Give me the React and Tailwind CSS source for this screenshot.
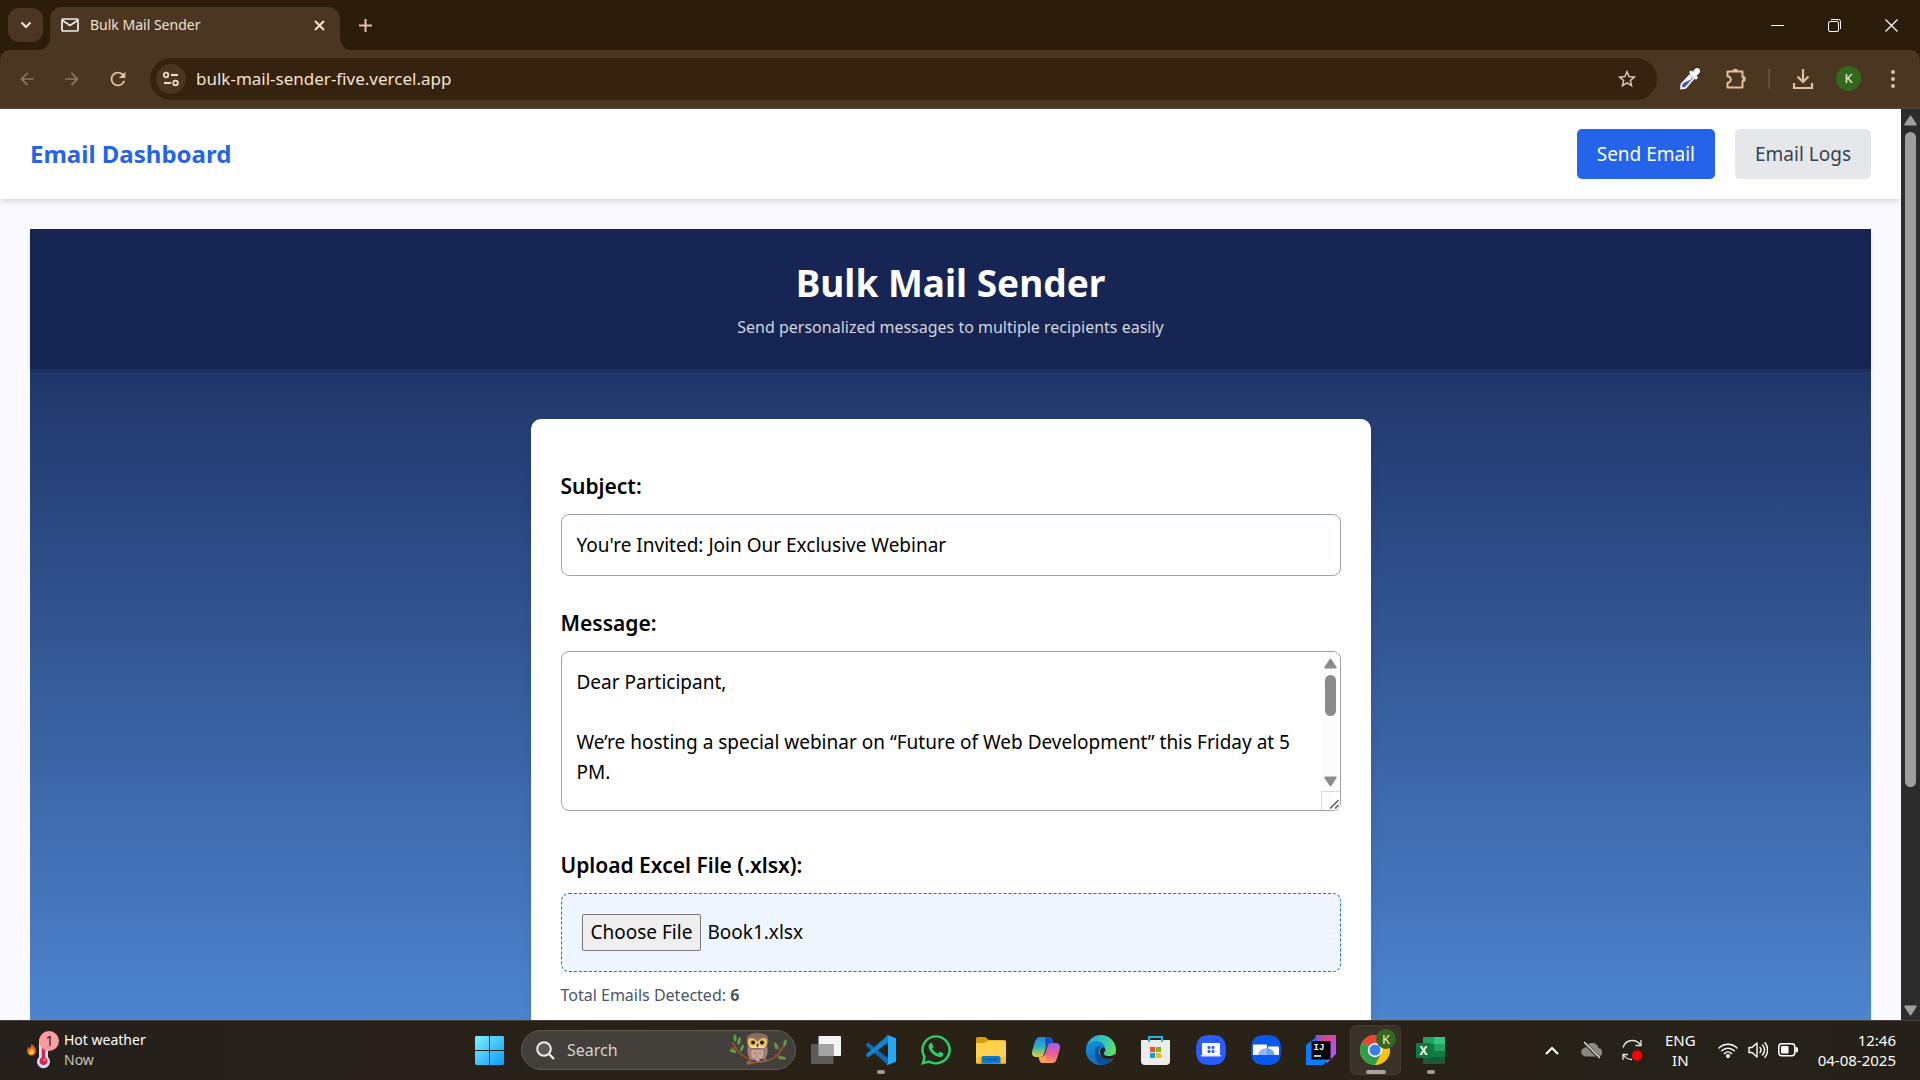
import React, { useRef } from "react";
import { MdArrowBack, MdArrowForward, MdRefresh, MdStarBorder } from "react-icons/md";
import { FaWhatsapp } from "react-icons/fa";

const MESSAGE = `Dear Participant,

We’re hosting a special webinar on “Future of Web Development” this Friday at 5 PM.`;

/* ---------- browser icons ---------- */

const MailIcon = () => (
  <svg width="18" height="14" viewBox="0 0 18 14" fill="none" stroke="#f1efee" strokeWidth="1.700">
    <rect x="1" y="1" width="16" height="12" rx="1" />
    <path d="M1.5 2.5 9 7.5l7.5-5" />
  </svg>
);

const TuneIcon = () => (
  <svg width="18" height="16" viewBox="0 0 18 16" fill="none" stroke="#ecdccc" strokeWidth="1.800">
    <circle cx="4" cy="4" r="2.3" />
    <path d="M9 4h7M2 12h7" />
    <circle cx="13.5" cy="12" r="2.3" />
  </svg>
);

const DropperIcon = () => (
  <svg width="22" height="24" viewBox="0 0 22 24">
    <path d="M2 21.5 2.5 17 12 7l3.5 3.5-9 10.3z" fill="#3f51c5" stroke="#fff" strokeWidth="1.8" strokeLinejoin="round" />
    <path d="m4 16 7-7 3 1-3 3z" fill="#fff" />
    <path d="m10 5 2-1.5 1.5 1.2L16 2c1.500-1.500 3-1.500 4.200 0s1.300 2.800 0 4.200l-2.700 2.600L19 10.500 17 13z" fill="#fff" />
  </svg>
);

const PuzzleIcon = () => (
  <svg width="22" height="22" viewBox="0 0 22 22">
    <path d="M2.500 3.500h15v5.300a2.200 2.200 0 0 1 0 4.400v6.300h-15v-4.700a3.300 3.300 0 0 0 0-6.600z" fill="none" stroke="#e2bf9f" strokeWidth="2" strokeLinejoin="round" />
    <path d="M7.500 3.500a2.800 2.800 0 0 1 5.600 0zM17.500 8.500a2.600 2.600 0 0 1 0 5z" fill="#e2bf9f" />
  </svg>
);

const DownloadIcon = () => (
  <svg width="22" height="22" viewBox="0 0 22 22" fill="none" stroke="#e2bf9f" strokeWidth="2.2">
    <path d="M11 1v12.500M5.500 8.500 11 14l5.500-5.500M2 15v5h18v-5" />
  </svg>
);

const Triangle = ({ down, color }) => (
  <svg width="13" height="11" viewBox="0 0 13 11" className={down ? "rotate-180" : ""}>
    <path d="M6.500 1.500 11.800 9.500H1.200z" fill={color} stroke={color} strokeWidth="1.800" strokeLinejoin="round" />
  </svg>
);

/* ---------- taskbar icons ---------- */

const WindowsIcon = () => (
  <svg width="29" height="29" viewBox="0 0 29 29">
    <defs>
      <linearGradient id="win" x1="0" y1="0" x2="1" y2="1">
        <stop offset="0" stopColor="#7df0ff" />
        <stop offset="1" stopColor="#0a9bf8" />
      </linearGradient>
    </defs>
    <path fill="url(#win)" d="M1 0h13v14H0V1zM15 0h13l1 1v13H15zM0 15h14v14H1l-1-1zM15 15h14v13l-1 1H15z" />
  </svg>
);

const WeatherIcon = () => (
  <svg width="32" height="38" viewBox="0 0 32 38">
    <path d="M4.500 13c2.500 1.500 4.500 4 4.500 7a4.500 4.500 0 0 1-9 0c0-2 1-3 1.500-4l1.500 1c.8-1.500 1.500-2.500 1.500-4z" fill="#ee5a24" />
    <path d="M4.800 17.500c1.800 1.500 2.200 2.500 2.200 3.800a2.500 2.500 0 0 1-5 0c0-1.500 2-2 2.800-3.800z" fill="#ffc93c" />
    <path d="M12 8h9v18a6.500 6.500 0 1 1-9 0z" fill="#cfe2f8" />
    <path d="M14.700 9h3.600v17.600a4 4 0 1 1-3.600 0z" fill="#d9264d" />
    <circle cx="17.500" cy="29" r="1.200" fill="#ff9fb0" />
    <circle cx="22" cy="10" r="10" fill="#ff9a9f" />
    <text x="22.500" y="15" fontSize="14" textAnchor="middle" fill="#2b2020" fontFamily="Noto Sans">1</text>
  </svg>
);

const OwlIcon = () => (
  <svg width="57" height="34" viewBox="0 0 57 34">
    <path d="M3 10c3 6 6 11 12 14 7 4 12 6 20 4 8-1 13-5 19-15M7 16l-5-1M50 17l-3-5M45 22l7 2" fill="none" stroke="#8a5230" strokeWidth="1.800" strokeLinecap="round" />
    <path d="M17 30.500c6-3 12-2 19-4" stroke="#a4643a" strokeWidth="3.500" fill="none" />
    <g fill="#5f9d4a">
      <ellipse cx="5" cy="5" rx="1.500" ry="3.500" />
      <ellipse cx="9" cy="8" rx="1.600" ry="3.800" transform="rotate(15 9 8)" />
      <ellipse cx="3" cy="18" rx="3.500" ry="1.600" transform="rotate(15 3 18)" />
      <ellipse cx="12" cy="15" rx="1.500" ry="3.500" transform="rotate(20 12 15)" />
      <ellipse cx="46" cy="13" rx="1.500" ry="3.500" transform="rotate(-15 46 13)" />
      <ellipse cx="55" cy="10" rx="1.500" ry="3.500" transform="rotate(15 55 10)" />
      <ellipse cx="52" cy="25" rx="4" ry="1.600" transform="rotate(8 52 25)" />
    </g>
    <path d="M18 12c-1.500 8 0 14 5 16h9c5-3 7-8 5-16z" fill="#a07e72" />
    <path d="M22 17c-2 5 0 9 4.500 11 6-1 8-6 6-11z" fill="#c9a996" />
    <path d="M24 20h2M29 20h2M26 23h2M24 26h2M29 26h2" stroke="#8a6455" strokeWidth="1.200" />
    <path d="M17 4c1-2.500 6-4 10.500-4S37 1.500 38 4c1 4 0 8-2 10.500-4 2-13 2-17 0C17 12 16 8 17 4z" fill="#8f6a63" />
    <path d="M18.500 6c3-2 6 0 9 3 3-3 6-5 9-3 1 5-.5 9-4 9h-10c-3.500 0-5-4-4-9z" fill="#f0dfc8" />
    <circle cx="22.500" cy="9.500" r="4" fill="#f0c230" />
    <circle cx="32.500" cy="9.500" r="4" fill="#f0c230" />
    <circle cx="23" cy="9.500" r="2" fill="#1f1a17" />
    <circle cx="32" cy="9.500" r="2" fill="#1f1a17" />
    <path d="m27.500 10 1.500 2-1.500 3L26 12z" fill="#7d4c2a" />
    <path d="M21 27h5v2h-5zM30 26h4v2h-4z" fill="#4a3c8f" />
  </svg>
);

const TaskViewIcon = () => (
  <svg width="30" height="28" viewBox="0 0 30 28">
    <rect x="7.500" y="0" width="22.500" height="20" rx="1" fill="#f4f4f4" />
    <rect x="0" y="8" width="22.500" height="20" rx="1" fill="#666" fillOpacity=".85" />
    <path d="M7.500 8h15v12h-15z" fill="#a3a3a3" />
  </svg>
);

const CodeIcon = () => (
  <svg width="30" height="30" viewBox="0 0 30 30">
    <path d="M0 9.500 2.200 7.500 22 23v7L.3 11z" fill="#0b6cb5" />
    <path d="M0 20.500 2.200 22.500 22 7.500V0L.3 19z" fill="#1183cf" />
    <path d="M21.500 0 30 3.200v23.500L21.500 30c-.8 0-1.200-.4-1.500-.8 1 .5 2 0 2-1.200V2c0-1.200-1-1.700-2-1.200.3-.4.700-.8 1.500-.8z" fill="#29a8f2" />
  </svg>
);

const FolderIcon = () => (
  <svg width="30" height="27" viewBox="0 0 30 27">
    <path d="M0 1.500Q0 0 1.500 0H9c1.500 0 2.500 3 4 3h15.500Q30 3 30 4.500V12H0z" fill="#dc9a0c" />
    <path d="M0 6h8.500l4-2.500h16Q30 3.500 30 5v20.500q0 1-1 1H1q-1 0-1-1z" fill="#ffd24d" />
    <path d="M0 20h30v5.500q0 1-1 1H1q-1 0-1-1z" fill="#f9c22e" />
    <path d="M5.500 26.500V21q0-2 2-2h15q2 0 2 2v5.500z" fill="#1376c4" />
    <path d="M9 22.500h12" stroke="#0b4f8d" strokeWidth="1.200" />
  </svg>
);

const CopilotIcon = () => (
  <svg width="28" height="26" viewBox="0 0 28 26">
    <defs>
      <linearGradient id="copA" x1="0" y1="0" x2="0" y2="1">
        <stop offset="0" stopColor="#1c86ee" />
        <stop offset=".5" stopColor="#2bb5b5" />
        <stop offset="1" stopColor="#e9c93a" />
      </linearGradient>
      <linearGradient id="copB" x1="0" y1="0" x2="0" y2="1">
        <stop offset="0" stopColor="#a25bf0" />
        <stop offset=".6" stopColor="#f0608a" />
        <stop offset="1" stopColor="#ff9c5e" />
      </linearGradient>
    </defs>
    <path d="M8 0h9c2 0 3 1 3.500 3l.7 3H18c-2 0-3 1-3.500 3l-2 6.500C11.500 19 10.500 20 8 20H4c-4 0-4.700-3-3.500-7L3 4.500C4 1.500 5.500 0 8 0z" fill="url(#copA)" />
    <path d="M13 0h4c2 0 3 1 3.500 3l.7 3H18c-2 0-3 1-3.500 3l-.8 2z" fill="#1851c4" />
    <path d="M20 26h-9c-2 0-3-1-3.500-3L6.800 20H9c2.500 0 3.500-1 4.500-4.500l2-6.500C16 7 17 6 19 6h5c4 0 4.700 3 3.500 7L25 21.500C24 24.500 22.500 26 20 26z" fill="url(#copB)" />
    <path d="M15 26h-4c-2 0-3-1-3.500-3l-.7-3H9c2.500 0 3.500-1 4.300-3.500z" fill="#ffa24c" />
  </svg>
);

const EdgeIcon = () => (
  <svg width="30" height="30" viewBox="0 0 30 30">
    <defs>
      <linearGradient id="edgeTop" x1="0" y1="0.200" x2="1" y2="0.500">
        <stop offset="0" stopColor="#2aa6e2" />
        <stop offset=".6" stopColor="#35c9b4" />
        <stop offset="1" stopColor="#6ee04e" />
      </linearGradient>
      <linearGradient id="edgeBody" x1="0" y1="0" x2="0.600" y2="1">
        <stop offset="0" stopColor="#1492dd" />
        <stop offset="1" stopColor="#0f66b5" />
      </linearGradient>
    </defs>
    <circle cx="15" cy="15" r="15" fill="url(#edgeTop)" />
    <path d="M0 14C1 8 6 6 10 6c6 0 9 4 9 8-3-2-6 0-6 4 0 5 6 8 14 5-2 4-7 7-12 7A15 15 0 0 1 0 14z" fill="url(#edgeBody)" />
    <path d="M9 17c0-4 3-6 6-6-3 2-3 5-2 8 2 4 8 5 14.500 3.500C25 27.500 20 30 15.500 30 11 28 8.500 22 9 17z" fill="#0c4f97" />
    <path d="M17.500 12c2 1 2.500 3 1 5-1.500 1.500-.5 3.500 3 4 3 .3 6-.5 7.200-2L30 23l-3 .500c-6 1.500-11 0-12.500-3-1.500-4-.5-7 3-8.500z" fill="#29231c" />
  </svg>
);

const StoreIcon = () => (
  <svg width="29" height="29" viewBox="0 0 29 29">
    <path d="M8 6V1h13v5" fill="none" stroke="#28b4ea" strokeWidth="2" />
    <path d="M0 5q0-1 1-1h27q1 0 1 1v20q0 4-4 4H4q-4 0-4-4z" fill="#ececec" />
    <path d="M8 4h-1v2h2V4zM20 4h2v2h-2z" fill="#28b4ea" />
    <path d="M9 11h5v5H9z" fill="#f25022" />
    <path d="M15 11h5v5h-5z" fill="#7fba00" />
    <path d="M9 17h5v5H9z" fill="#00a4ef" />
    <path d="M15 17h5v5h-5z" fill="#ffb900" />
  </svg>
);

const LaptopIcon = () => (
  <svg width="30" height="30" viewBox="0 0 30 30">
    <path d="M15 0c11 0 15 4 15 15s-4 15-15 15S0 26 0 15 4 0 15 0z" fill="#2a5cff" />
    <rect x="6" y="8" width="18" height="12" rx="1" fill="#fff" />
    <path d="M4.500 20h21l-1 1.500h-19z" fill="#dfe7ff" />
    <g fill="#2a5cff">
      <rect x="11.500" y="11" width="3" height="3" rx="1" />
      <rect x="15.500" y="11" width="3" height="3" rx="1" />
      <rect x="11.500" y="15" width="3" height="3" rx="1" />
      <rect x="15.500" y="15" width="3" height="3" rx="1" />
    </g>
  </svg>
);

const ShareIcon = () => (
  <svg width="30" height="30" viewBox="0 0 30 30">
    <path d="M15 0c11 0 15 4 15 15s-4 15-15 15S0 26 0 15 4 0 15 0z" fill="#0a57ee" />
    <rect x="2" y="9.500" width="14" height="10.500" rx="1" fill="#fff" />
    <rect x="17" y="11.500" width="11" height="8.500" rx="1" fill="#fff" />
    <path d="M7 20a8.500 7 0 0 1 9.500-6.800V20z" fill="#8fb8f5" />
    <path d="M16.500 20v-6.800A8 7 0 0 1 23.500 20z" fill="#6fa2f2" />
  </svg>
);

const IdeaIcon = () => (
  <svg width="30" height="30" viewBox="0 0 30 30">
    <defs>
      <linearGradient id="idea" x1="0" y1="0" x2="1" y2="0.600">
        <stop offset="0" stopColor="#5b5fe8" />
        <stop offset=".5" stopColor="#e0428f" />
        <stop offset="1" stopColor="#a45cf5" />
      </linearGradient>
    </defs>
    <path d="M10 0h20v19l-9 9-14-14z" fill="url(#idea)" />
    <path d="M0 10 9 3l14 21-6 6H0z" fill="#087cfa" />
    <rect x="5.500" y="6" width="19" height="18.500" fill="#000" />
    <text x="7.500" y="15" fontSize="9" fontWeight="bold" fill="#fff" fontFamily="Liberation Mono">IJ</text>
    <path d="M8 21h7" stroke="#fff" strokeWidth="1.500" />
  </svg>
);

const ChromeIcon = () => (
  <svg width="36" height="36" viewBox="0 0 36 36">
    <circle cx="15" cy="21" r="15" fill="#fbc116" />
    <path d="M15 21 2 13.500A15 15 0 0 1 28 13.500z" fill="#ea4335" />
    <path d="M15 21 2 13.500A15 15 0 0 0 15 36l6.500-11.300z" fill="#2f9e4b" />
    <path d="M15 14h13.300A15 15 0 0 1 15 36l6.500-11.300z" fill="#fbc116" />
    <circle cx="15" cy="21" r="7.200" fill="#fff" />
    <circle cx="15" cy="21" r="5.600" fill="#3b7ded" />
    <circle cx="26" cy="10" r="10" fill="#33691e" />
    <text x="26" y="15" fontSize="13" textAnchor="middle" fill="#e6ecdf" fontFamily="Noto Sans">K</text>
  </svg>
);

const ExcelIcon = () => (
  <svg width="29" height="27" viewBox="0 0 29 27">
    <path d="M7 0h11v7H7z" fill="#21a366" />
    <path d="M18 0h11v7H18z" fill="#33c481" />
    <path d="M7 7h11v7H7z" fill="#107c41" />
    <path d="M18 7h11v7H18z" fill="#21a366" />
    <path d="M7 14h22v7H7z" fill="#107c41" />
    <path d="M7 20h22v7H7z" fill="#185c37" />
    <rect y="6" width="15" height="15" rx="1" fill="#0f7a40" />
    <text x="7.500" y="18" fontSize="12" fontWeight="bold" textAnchor="middle" fill="#fff" fontFamily="Noto Sans">X</text>
  </svg>
);

const CloudOffIcon = () => (
  <svg width="22" height="18" viewBox="0 0 22 18">
    <path d="M5 15.500a4.500 4.500 0 0 1-.5-9C5 3.500 8 2 11 2c3.500 0 6 2 6.500 5a4.300 4.300 0 0 1 0 8.500z" fill="#8b8782" />
    <path d="m2.500 1 16 16" stroke="#29231a" strokeWidth="3" />
    <path d="m3 1 16 16" stroke="#eee" strokeWidth="1.300" />
  </svg>
);

const SyncIcon = () => (
  <svg width="22" height="22" viewBox="0 0 22 22" fill="none" stroke="#e8e6e3" strokeWidth="1.300">
    <path d="M2 8.500C4 3 8 1.500 11 1.500c4 0 7 2 8.500 4.500M20 1v5.500h-5.500M11 20.500c-4 0-7-2-8.500-4.500M2 21v-5.500h5" />
    <circle cx="16" cy="16.500" r="5.200" fill="#f00" stroke="none" />
  </svg>
);

const WifiIcon = () => (
  <svg width="20" height="16" viewBox="0 0 20 16" fill="none" stroke="#fff" strokeWidth="1.500" strokeLinecap="round">
    <path d="M1 6a12.500 12.500 0 0 1 18 0M3.800 8.800a8.800 8.800 0 0 1 12.400 0M6.500 11.500a5 5 0 0 1 7 0" />
    <circle cx="10" cy="14" r="1.300" fill="#fff" />
  </svg>
);

const VolumeIcon = () => (
  <svg width="20" height="18" viewBox="0 0 20 18" fill="none" stroke="#fff" strokeWidth="1.400" strokeLinecap="round" strokeLinejoin="round">
    <path d="M1 6.500h3L9 2v14l-5-4.500H1zM12 6.500c1.300 1.500 1.300 3.500 0 5M14.500 4c2.500 3 2.500 7 0 10M17 1.800c3.500 4.200 3.500 10.200 0 14.400" />
  </svg>
);

const BatteryIcon = () => (
  <svg width="20" height="14" viewBox="0 0 20 14">
    <rect x=".8" y=".8" width="16" height="12" rx="3" fill="none" stroke="#fff" strokeWidth="1.500" />
    <rect x="3" y="3" width="7.500" height="7.600" rx="1" fill="#fff" />
    <path d="M18 4.500h.5q1 0 1 1v2.500q0 1-1 1H18z" fill="#fff" stroke="#fff" />
  </svg>
);

/* ---------- browser frame ---------- */

function TabStrip() {
  return (
    <div className="flex h-[50px] shrink-0 items-stretch bg-[#2c1c0a]">
      <div className="flex items-center pr-[7px] pl-2">
        <button aria-label="Search tabs" className="flex h-[34px] w-[35px] items-center justify-center rounded-[11px] bg-[#4b3621]">
          <svg width="12" height="8" viewBox="0 0 12 8" fill="none" stroke="#f3e0d0" strokeWidth="2.200">
            <path d="m1.500 1.500 4.500 4.500 4.500-4.500" />
          </svg>
        </button>
      </div>
      <div className="relative mt-[7px] flex w-[290px] items-center rounded-t-xl bg-[#4b3621] pb-[7px] pr-[13px] pl-[11px]">
        <svg className="absolute bottom-0 -left-3" width="12" height="12" viewBox="0 0 12 12">
          <path d="M12 0v12H0A12 12 0 0 0 12 0z" fill="#4b3621" />
        </svg>
        <svg className="absolute -right-3 bottom-0" width="12" height="12" viewBox="0 0 12 12">
          <path d="M0 0v12h12A12 12 0 0 1 0 0z" fill="#4b3621" />
        </svg>
        <MailIcon />
        <span className="ml-[11px] flex-1 text-sm text-[#f0e0d2]">Bulk Mail Sender</span>
        <button aria-label="Close tab" className="p-[2px]">
          <svg width="11" height="11" viewBox="0 0 11 11" stroke="#f3e0d0" strokeWidth="2">
            <path d="m1 1 9 9M10 1l-9 9" />
          </svg>
        </button>
      </div>
      <button aria-label="New tab" className="ml-[19px]">
        <svg width="13" height="13" viewBox="0 0 13 13" stroke="#e5c4a6" strokeWidth="2">
          <path d="M6.500 0v13M0 6.500h13" />
        </svg>
      </button>
      <div className="ml-auto flex">
        <button aria-label="Minimize" className="flex w-[57px] items-center justify-center">
          <span className="h-px w-[13px] bg-white" />
        </button>
        <button aria-label="Restore" className="flex w-[57px] items-center justify-center">
          <svg width="13" height="13" viewBox="0 0 13 13" fill="none" stroke="#fff">
            <rect x=".5" y="2.500" width="10" height="10" rx="1.500" />
            <path d="M3 .5h7.500a2 2 0 0 1 2 2V10" />
          </svg>
        </button>
        <button aria-label="Close window" className="flex w-[57px] items-center justify-center">
          <svg width="13" height="13" viewBox="0 0 13 13" stroke="#fff" strokeWidth="1.200">
            <path d="m.5.5 12 12M12.500.5l-12 12" />
          </svg>
        </button>
      </div>
    </div>
  );
}

function Toolbar() {
  return (
    <div className="shrink-0 bg-[#2c1c0a]">
      <div className="flex h-[59px] items-center rounded-t-[10px] border-b-2 border-[#4d4238] bg-[#4b3621] pr-[25px] pl-[17px]">
        <button aria-label="Back" className="mr-[25px] text-[#8d755f]"><MdArrowBack size={20} /></button>
        <button aria-label="Forward" className="mr-[25px] text-[#8d755f]"><MdArrowForward size={20} /></button>
        <button aria-label="Reload" className="mr-[21px] text-[#e2bf9f]"><MdRefresh size={22} /></button>
        <div className="flex h-[42px] flex-1 items-center rounded-full bg-[#35220f] px-[6px]">
          <button aria-label="Site information" className="flex size-[30px] items-center justify-center rounded-full bg-[#4b3621]">
            <TuneIcon />
          </button>
          <input aria-label="Address" defaultValue="bulk-mail-sender-five.vercel.app" className="ml-[10px] min-w-0 flex-1 bg-transparent text-[17px] text-[#f3e2d2] outline-none" />
          <button aria-label="Bookmark" className="mr-[13px] text-[#dccbbc]"><MdStarBorder size={22} /></button>
        </div>
        <div className="ml-[22px] flex items-center">
          <button aria-label="Color picker" className="mr-6"><DropperIcon /></button>
          <button aria-label="Extensions" className="mr-[21px]"><PuzzleIcon /></button>
          <span className="mr-[22px] h-5 w-[2px] bg-[#6b4f35]" />
          <button aria-label="Downloads" className="mr-[22px]"><DownloadIcon /></button>
          <button aria-label="Profile" className="mr-[30px] flex size-[25px] items-center justify-center rounded-full bg-[#33691e] text-[13px] text-white">K</button>
          <button aria-label="Menu">
            <svg width="4" height="18" viewBox="0 0 4 18" fill="#e2bf9f">
              <circle cx="2" cy="2" r="2" /><circle cx="2" cy="9" r="2" /><circle cx="2" cy="16" r="2" />
            </svg>
          </button>
        </div>
      </div>
    </div>
  );
}

function PageScrollbar() {
  return (
    <div className="flex w-[19px] shrink-0 flex-col items-center bg-[#2c2c2c] pt-[6px] pb-1">
      <Triangle color="#9f9f9f" />
      <div className="mt-[6px] flex w-full flex-1 justify-center">
        <div className="h-3/4 w-[11px] rounded-full bg-[#9f9f9f]" />
      </div>
      <Triangle color="#9f9f9f" down />
    </div>
  );
}

/* ---------- page ---------- */

const labelClass = "mb-[10px] block text-[21px] leading-[35px] font-semibold text-black";

function MailForm() {
  const fileRef = useRef(null);
  return (
    <form className="mx-auto mt-[50px] min-h-[800px] w-full max-w-[840px] rounded-[10px] bg-white px-[30px] pt-[50px] text-[19px] text-black shadow-lg">
      <label htmlFor="subject" className={labelClass}>Subject:</label>
      <input id="subject" defaultValue="You're Invited: Join Our Exclusive Webinar" className="h-[62px] w-full rounded-lg border border-[#9ca3af] px-[15px] outline-none" />

      <label htmlFor="message" className={labelClass + " mt-[30px]"}>Message:</label>
      <div className="flex h-40 overflow-hidden rounded-lg border border-[#9ca3af]">
        <textarea id="message" defaultValue={MESSAGE} className="min-w-0 flex-1 resize-none overflow-hidden px-[15px] py-[15px] leading-[30px] outline-none" />
        <div className="flex w-[19px] flex-col items-center bg-[#fcfcfc]">
          <div className="flex w-full flex-1 flex-col items-center pt-[6px] pb-1">
            <Triangle color="#8b8b8b" />
            <div className="mt-[6px] h-[41px] w-[11px] rounded-full bg-[#8b8b8b]" />
            <div className="mt-auto flex"><Triangle color="#8b8b8b" down /></div>
          </div>
          <div className="flex h-[19px] w-full items-end justify-end border-t border-l border-[#d9d9d9] bg-white p-px">
            <svg width="10" height="10" viewBox="0 0 10 10" stroke="#555" strokeWidth="1.300">
              <path d="M1 9.500 9.500 1M6 9.500 9.500 6" />
            </svg>
          </div>
        </div>
      </div>

      <label htmlFor="file" className={labelClass + " mt-[37px]"}>Upload Excel File (.xlsx):</label>
      <div className="flex h-[79px] items-center rounded-lg border border-dashed border-[#2563eb] bg-[#eff6ff] px-5">
        <input id="file" ref={fileRef} type="file" accept=".xlsx" className="sr-only" />
        <button type="button" onClick={() => fileRef.current.click()} className="h-[37px] rounded-[2px] border border-[#767676] bg-[#efefef] px-2">Choose File</button>
        <span className="ml-[6px]">Book1.xlsx</span>
      </div>
      <p className="mt-[10px] text-base leading-[26px] text-[#4b5563]">Total Emails Detected: <b>6</b></p>
    </form>
  );
}

function Page() {
  return (
    <div className="flex min-h-0 flex-1">
      <div className="min-w-0 flex-1 overflow-hidden bg-[#f9f9ff]">
        <header className="relative flex h-[90px] items-center justify-between bg-white px-[30px] shadow-md">
          <h1 className="text-2xl font-bold text-[#2563eb]">Email Dashboard</h1>
          <nav className="flex gap-5 text-[19px]">
            <button className="h-[50px] rounded-[5px] bg-[#2563eb] px-5 text-white">Send Email</button>
            <button className="h-[50px] rounded-[5px] bg-[#e5e7eb] px-5 text-[#374151]">Email Logs</button>
          </nav>
        </header>
        <main className="p-[30px]">
          <div className="min-h-[1065px] bg-linear-to-b/srgb from-[#172554] to-[#60a5fa]">
            <div className="flex h-[140px] flex-col items-center bg-[#172554] pt-[29px] shadow-md">
              <h2 className="text-[37px] leading-[50px] font-bold text-white">Bulk Mail Sender</h2>
              <p className="mt-[6px] text-base leading-[26px] text-[#d1d5db]">Send personalized messages to multiple recipients easily</p>
            </div>
            <MailForm />
          </div>
        </main>
      </div>
      <PageScrollbar />
    </div>
  );
}

/* ---------- taskbar ---------- */

const APPS = [
  { name: "Task view", Icon: TaskViewIcon },
  { name: "Code editor", Icon: CodeIcon, open: true },
  { name: "WhatsApp", Icon: () => <FaWhatsapp size={34} color="#25d366" /> },
  { name: "File Explorer", Icon: FolderIcon },
  { name: "Copilot", Icon: CopilotIcon },
  { name: "Edge", Icon: EdgeIcon },
  { name: "Store", Icon: StoreIcon },
  { name: "Laptop manager", Icon: LaptopIcon },
  { name: "Screen share", Icon: ShareIcon },
  { name: "IntelliJ IDEA", Icon: IdeaIcon },
];

function AppButton({ name, Icon, open }) {
  return (
    <button aria-label={name} className="relative flex h-[60px] w-[55px] items-center justify-center">
      <Icon />
      {open && <span className="absolute bottom-[6px] h-1 w-2 rounded-full bg-[#9b9895]" />}
    </button>
  );
}

function Taskbar() {
  return (
    <footer className="grid h-[60px] shrink-0 grid-cols-[1fr_auto_1fr] bg-linear-to-r from-[#25201c] via-[#2a2216] to-[#25211a] text-[15px] text-white shadow-[inset_0_1px_0_#45413c]">
      <button className="flex items-center gap-[5px] pl-[27px] text-left text-sm leading-5">
        <WeatherIcon />
        <span>
          <span className="block">Hot weather</span>
          <span className="block text-[#c5c2be]">Now</span>
        </span>
      </button>
      <div className="flex items-center">
        <button aria-label="Start" className="flex h-[60px] w-[55px] items-center justify-center"><WindowsIcon /></button>
        <div className="mr-[2px] ml-1 flex h-10 w-[275px] items-center rounded-full border border-[#5d5a55] bg-[#433f3a] pr-2 pl-[14px]">
          <svg width="19" height="19" viewBox="0 0 19 19" fill="none" stroke="#f0eeec" strokeWidth="2">
            <circle cx="8" cy="8" r="6.800" fill="#5c5853" />
            <path d="m13 13 5 5" strokeWidth="2.400" />
          </svg>
          <input aria-label="Search" placeholder="Search" className="ml-3 min-w-0 flex-1 bg-transparent text-base outline-none placeholder:text-[#d6d3d0]" />
          <OwlIcon />
        </div>
        {APPS.map((app) => <AppButton key={app.name} {...app} />)}
        <button aria-label="Chrome" className="relative mx-[2px] flex h-[50px] w-[51px] justify-center rounded-md border border-[#453c32] bg-[#3a3128] pt-[3px] pl-[5px]">
          <ChromeIcon />
          <span className="absolute bottom-0 left-[15px] h-1 w-5 rounded-full bg-[#a8a5a1]" />
        </button>
        <AppButton name="Excel" Icon={ExcelIcon} open />
      </div>
      <div className="flex items-center justify-end pr-6">
        <button aria-label="Hidden icons" className="mr-[22px]">
          <svg width="14" height="9" viewBox="0 0 14 9" fill="none" stroke="#fff" strokeWidth="2"><path d="m1 8 6-6 6 6" /></svg>
        </button>
        <button aria-label="Cloud storage" className="mr-[18px]"><CloudOffIcon /></button>
        <button aria-label="Sync" className="mr-[22px]"><SyncIcon /></button>
        <button className="mr-[22px] text-center leading-5">ENG<br />IN</button>
        <button aria-label="Network, volume, battery" className="mr-5 flex items-center gap-[10px]">
          <WifiIcon /><VolumeIcon /><BatteryIcon />
        </button>
        <button className="text-right leading-5">12:46<br />04-08-2025</button>
      </div>
    </footer>
  );
}

export default function App() {
  return (
    <div className="flex h-screen flex-col overflow-hidden font-['Noto_Sans','Open_Sans',sans-serif]">
      <TabStrip />
      <Toolbar />
      <Page />
      <Taskbar />
    </div>
  );
}
